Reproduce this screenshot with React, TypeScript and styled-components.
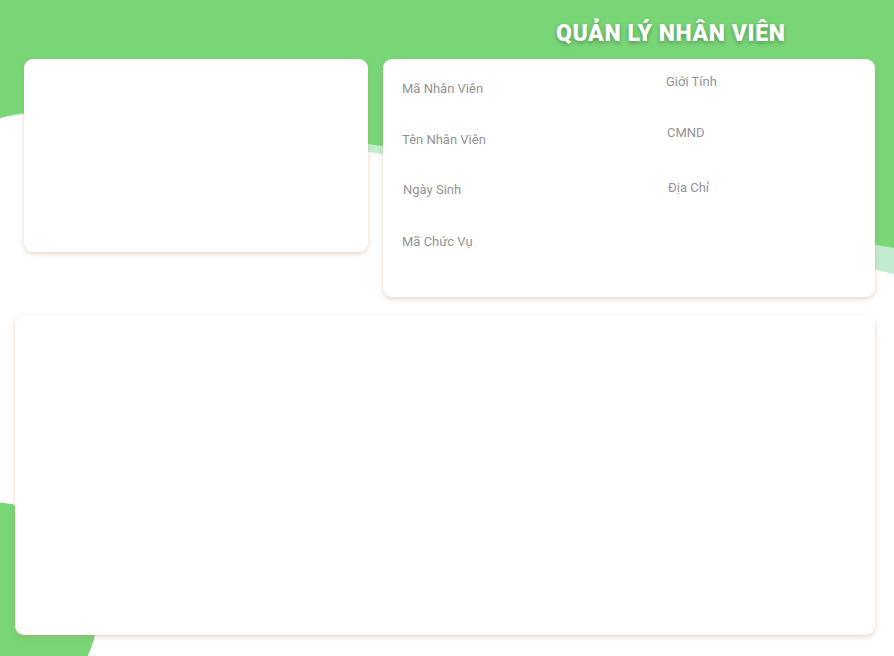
import React from "react";
import styled, { createGlobalStyle } from "styled-components";

const Global = createGlobalStyle`
  html, body { margin: 0; padding: 0; background: #ffffff; }
  body { font-family: Roboto, "Noto Sans", sans-serif; }
  * { box-sizing: border-box; }
`;

const Page = styled.div`
  position: relative;
  width: 894px;
  height: 656px;
  overflow: hidden;
  background: #ffffff;
`;

const Backdrop = styled.svg`
  position: absolute;
  left: 0;
  top: 0;
  width: 894px;
  height: 656px;
  z-index: 0;
`;

const Content = styled.div`
  position: relative;
  z-index: 1;
  display: flex;
  flex-direction: column;
  padding: 0 19px 0 15px;
`;

const Header = styled.header`
  height: 59px;
  display: flex;
  align-items: flex-start;
  padding: 19px 0 0 541px;
`;

const Title = styled.h1`
  margin: 0;
  font-family: Roboto, "Noto Sans", sans-serif;
  font-weight: 900;
  font-size: 23px;
  line-height: 30px;
  letter-spacing: 0.6px;
  color: #ffffff;
  text-shadow: 0 2px 4px rgba(0, 0, 0, 0.3);
`;

const TopRow = styled.div`
  display: flex;
  align-items: flex-start;
  gap: 15px;
  padding-left: 9px;
`;

const Card = styled.section<{ $w: number; $h: number }>`
  width: ${(p) => p.$w}px;
  height: ${(p) => p.$h}px;
  background: #ffffff;
  border-radius: 9px;
  box-shadow: 0 2px 5px rgba(190, 140, 100, 0.35);
`;

const FormCard = styled(Card)`
  display: grid;
  grid-template-columns: 264px 1fr;
  padding: 15px 0 0 19px;
`;

const Column = styled.div<{ $pt: number }>`
  display: flex;
  flex-direction: column;
  padding-top: ${(p) => p.$pt}px;
`;

const Label = styled.div<{ $h: number; $dx?: number }>`
  height: ${(p) => p.$h}px;
  padding-left: ${(p) => p.$dx ?? 0}px;
  font-family: Roboto, "Noto Sans", sans-serif;
  font-size: 13px;
  line-height: 16px;
  color: #939393;
`;

const BottomCard = styled(Card)`
  margin-top: 18px;
`;

export default function App() {
  return (
    <Page>
      <Global />
      <Backdrop viewBox="0 0 894 656">
        <path
          d="M0,118 C60,104 200,126 375,153 C560,182 740,240 894,274 L894,0 L0,0 Z"
          fill="#c2ecd0"
        />
        <path
          d="M0,118 C60,100 200,120 375,145 C560,172 740,222 894,248 L894,0 L0,0 Z"
          fill="#78d677"
        />
        <circle cx="-10" cy="610" r="108" fill="#78d677" />
      </Backdrop>
      <Content>
        <Header>
          <Title>QUẢN LÝ NHÂN VIÊN</Title>
        </Header>
        <TopRow>
          <Card $w={344} $h={193} />
          <FormCard $w={492} $h={238}>
            <Column $pt={7}>
              <Label $h={51}>Mã Nhân Viên</Label>
              <Label $h={50}>Tên Nhân Viên</Label>
              <Label $h={52} $dx={1}>Ngày Sinh</Label>
              <Label $h={20}>Mã Chức Vụ</Label>
            </Column>
            <Column $pt={0}>
              <Label $h={51}>Giới Tính</Label>
              <Label $h={55} $dx={1}>CMND</Label>
              <Label $h={20} $dx={2}>Địa Chỉ</Label>
            </Column>
          </FormCard>
        </TopRow>
        <BottomCard $w={860} $h={320} />
      </Content>
    </Page>
  );
}
